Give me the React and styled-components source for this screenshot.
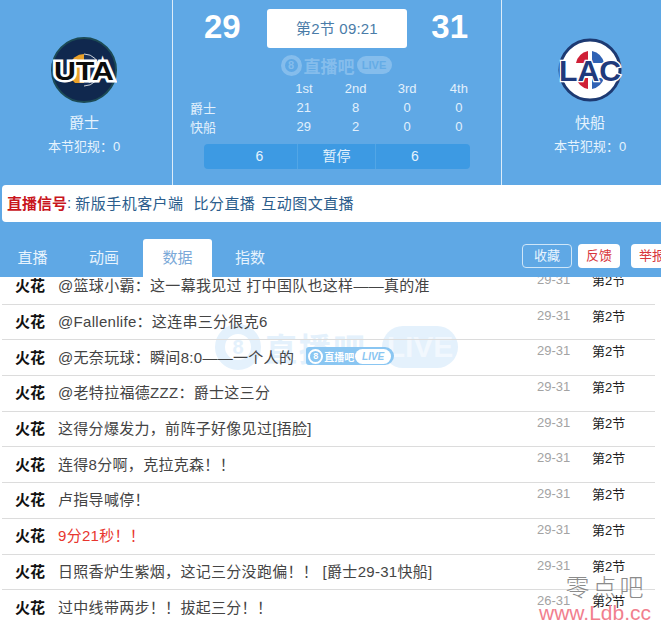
import styled, { createGlobalStyle } from "styled-components";

const HEADER_BLUE = "#5fa8e5";

const GlobalStyle = createGlobalStyle`
  html, body {
    margin: 0;
    padding: 0;
    background: #fff;
    overflow: hidden;
  }
  body {
    font-family: "Liberation Sans", "Noto Sans CJK SC", sans-serif;
  }
`;

const Page = styled.div`
  width: 661px;
  height: 625px;
  overflow: hidden;
  position: relative;
  background: ${HEADER_BLUE};
`;

const Scoreboard = styled.header`
  display: grid;
  grid-template-columns: 172px 330px 159px;
  height: 185px;
`;

const TeamPanel = styled.div`
  display: flex;
  flex-direction: column;
  align-items: center;
  padding-top: 37px;
  color: #e6f3fd;
  padding-right: ${({ $right }) => $right || 0}px;
  padding-left: ${({ $left }) => $left || 0}px;
`;

const TeamName = styled.div`
  font-size: 15px;
  line-height: 20px;
  margin-top: 10px;
`;

const Fouls = styled.div`
  font-size: 13px;
  line-height: 18px;
  margin-top: 5px;
`;

const Middle = styled.div`
  border-left: 1px solid #dcecf9;
  border-right: 1px solid #dcecf9;
  padding-top: 8px;
`;

const ScoreRow = styled.div`
  display: grid;
  grid-template-columns: 94px 140px 94px;
  align-items: center;
  height: 39px;
`;

const Score = styled.div`
  font-size: 33px;
  font-weight: bold;
  color: #fff;
  margin-bottom: 2px;
  text-align: ${({ $side }) => $side};
  padding: ${({ $side }) => ($side === "right" ? "0 33px 0 0" : "0 0 0 31px")};
`;

const Clock = styled.div`
  height: 39px;
  line-height: 39px;
  background: #fff;
  border-radius: 3px;
  text-align: center;
  font-size: 15px;
  letter-spacing: 0.2px;
  color: #4a7ca8;
`;

const CenterMark = styled.div`
  display: flex;
  justify-content: center;
  margin: 7px 0 0 -2px;
  height: 22px;
`;

const QuarterTable = styled.div`
  display: grid;
  grid-template-columns: 88px repeat(4, 51.7px);
  grid-auto-rows: 19px;
  align-items: center;
  padding-left: 17px;
  margin-top: 3px;
  font-size: 13px;
  color: #e2f0fc;
`;

const Cell = styled.div`
  text-align: ${({ $label }) => ($label ? "left" : "center")};
`;

const TimeoutBar = styled.div`
  display: grid;
  grid-template-columns: 93px 78px 95px;
  height: 25px;
  width: 266px;
  margin: 8px 0 0 31px;
  background: #3d9ae3;
  border-radius: 4px;
  color: #e6f3fd;
  font-size: 14px;
  line-height: 25px;
  text-align: center;
`;

const TimeoutCell = styled.div`
  border-left: ${({ $divider }) => ($divider ? "1px solid #52a6e6" : "none")};
  padding-left: ${({ $pushLeft }) => $pushLeft || 0}px;
  padding-right: ${({ $pushRight }) => $pushRight || 0}px;
`;

const Banner = styled.div`
  height: 37px;
  box-sizing: border-box;
  padding: 0 0 2px 5px;
  margin-left: 2px;
  background: #fff;
  border-radius: 4px 0 0 4px;
  display: flex;
  align-items: center;
  font-size: 15px;
  color: #2b5d8c;
  white-space: nowrap;
`;

const SignalLabel = styled.span`
  color: #c9161d;
  font-weight: bold;
`;

const SignalLink = styled.span`
  margin-right: ${({ $gap }) => $gap}px;
  letter-spacing: 0.45px;
`;

const TabBar = styled.div`
  display: flex;
  align-items: flex-end;
  height: 55px;
  white-space: nowrap;
`;

const Tab = styled.div`
  width: ${({ $width }) => $width}px;
  height: 38px;
  line-height: 38px;
  text-align: center;
  font-size: 15px;
  color: ${({ $active }) => ($active ? "#7ba9d8" : "#e6f3fd")};
  background: ${({ $active }) => ($active ? "#fff" : "transparent")};
  border-radius: 3px 3px 0 0;
`;

const Actions = styled.div`
  display: flex;
  margin-left: auto;
  width: 139px;
  flex-shrink: 0;
  gap: 6px;
  padding-bottom: 9px;
`;

const ActionButton = styled.div`
  flex-shrink: 0;
  height: ${({ $outline }) => ($outline ? 22 : 24)}px;
  line-height: ${({ $outline }) => ($outline ? 22 : 24)}px;
  width: ${({ $width }) => $width}px;
  margin-right: ${({ $gap }) => $gap || 0}px;
  text-align: center;
  font-size: 13px;
  border-radius: 4px;
  border: ${({ $outline }) => ($outline ? "1px solid #cfe6f8" : "none")};
  color: ${({ $outline }) => ($outline ? "#eaf5fe" : "#d8363c")};
  background: ${({ $outline }) => ($outline ? "transparent" : "#fff")};
`;

const Feed = styled.div`
  position: relative;
  height: 348px;
  overflow: hidden;
  background: #fff;
`;

const FeedList = styled.ul`
  position: relative;
  list-style: none;
  margin: -8px 0 0 0;
  padding: 0;
`;

const FeedRow = styled.li`
  display: flex;
  align-items: center;
  height: 35.7px;
  box-sizing: border-box;
  margin: 0 6px 0 2px;
  padding: 0 0 3px 13px;
  border-bottom: 1px solid #dcdcdc;
  font-size: 15px;
  white-space: nowrap;
`;

const Author = styled.b`
  width: 43px;
  flex-shrink: 0;
  color: #111;
`;

const Message = styled.div`
  flex: 1;
  display: flex;
  align-items: center;
  letter-spacing: 0.3px;
  color: ${({ $alert }) => ($alert ? "#e8352e" : "#444")};
`;

const Stamp = styled.div`
  align-self: flex-start;
  margin-top: ${({ $muted }) => ($muted ? 1 : 2)}px;
  line-height: 20px;
  width: ${({ $width }) => $width}px;
  color: ${({ $muted }) => ($muted ? "#a3a3a3" : "#222")};
  font-size: 13px;
`;

const BigMark = styled.div`
  position: absolute;
  left: 215px;
  top: 48px;
  height: 44px;
  display: flex;
  align-items: center;
  gap: 4px;
  color: #e4f1fc;
  font-size: 32px;
  font-weight: bold;
  white-space: nowrap;
`;

const MarkRing = styled.span`
  display: inline-block;
  box-sizing: border-box;
  border-radius: 50%;
  flex-shrink: 0;
  text-align: center;
  letter-spacing: 0;
  width: ${({ $size }) => $size}px;
  height: ${({ $size }) => $size}px;
  line-height: ${({ $size, $ring }) => $size - $ring * 2}px;
  border: ${({ $ring }) => $ring}px solid currentColor;
  font-size: ${({ $font }) => $font}px;
  font-weight: bold;
`;

const MarkLive = styled.span`
  border-radius: 22px;
  text-align: center;
  font-weight: bold;
  letter-spacing: 0;
  font-style: ${({ $italic }) => ($italic ? "italic" : "normal")};
  width: ${({ $width }) => $width}px;
  height: ${({ $height }) => $height}px;
  line-height: ${({ $height }) => $height}px;
  font-size: ${({ $font }) => $font}px;
  background: ${({ $bg }) => $bg};
  color: ${({ $fg }) => $fg};
`;

const BigLabel = styled.span`
  width: 113px;
  letter-spacing: 2px;
`;

const InlineMark = styled.span`
  display: inline-flex;
  align-items: center;
  margin-left: 12px;
  height: 18px;
  width: 88px;
  background: #8ac6f2;
  color: #fff;
  border-radius: 3px 9px 9px 3px;
  font-size: 10px;
  font-weight: bold;
  padding-left: 2px;
  box-sizing: border-box;
  gap: 1px;
  letter-spacing: 0;
  white-space: nowrap;
`;

const HeaderMark = styled.div`
  display: flex;
  align-items: center;
  gap: 2px;
  color: #85bdec;
  font-size: 17px;
  font-weight: bold;
  white-space: nowrap;
`;

const SiteStamp = styled.div`
  position: absolute;
  right: 9px;
  bottom: 0;
  width: 114px;
  text-align: center;
`;

const StampName = styled.div`
  font-size: 24px;
  line-height: 27px;
  letter-spacing: 3px;
  font-weight: 300;
  color: #777;
  opacity: 0.85;
  padding-left: 22px;
`;

const StampUrl = styled.div`
  font-size: 21px;
  line-height: 24px;
  color: #f17f8e;
  white-space: nowrap;
`;

const UtaLogo = () => (
  <svg width="66" height="66" viewBox="0 0 66 66">
    <circle cx="33" cy="33" r="32" fill="#10284e" stroke="#1c4a55" strokeWidth="2" />
    <path d="M33 17a16 16 0 0 0-9 29h9z" fill="#eba22a" />
    <path d="M33 17a16 16 0 0 1 0 32" fill="#17305a" stroke="#cfd4da" strokeWidth="1" />
    <text
      x="33"
      y="43"
      textAnchor="middle"
      fontFamily="Liberation Sans"
      fontWeight="bold"
      fontSize="26"
      fill="#0c0c0c"
      stroke="#fff"
      strokeWidth="5"
      paintOrder="stroke"
      textLength="60"
      lengthAdjust="spacingAndGlyphs"
    >
      UTA
    </text>
  </svg>
);

const LacLogo = () => (
  <svg width="66" height="66" viewBox="0 0 66 66">
    <circle cx="33" cy="33" r="30" fill="#fff" stroke="#1d3a72" strokeWidth="3" />
    <path d="M19 26a16 16 0 0 1 12-12v12z" fill="#cf1f36" />
    <path d="M35 14a16 16 0 0 1 12 12H35z" fill="#2f62b4" />
    <path d="M19 41h12v11a16 16 0 0 1-12-11z" fill="#cf1f36" />
    <path d="M35 41h12a16 16 0 0 1-12 11z" fill="#2f62b4" />
    <text
      x="33"
      y="44"
      textAnchor="middle"
      fontFamily="Liberation Sans"
      fontWeight="bold"
      fontSize="29"
      fill="#1f3a7c"
      stroke="#fff"
      strokeWidth="2.5"
      paintOrder="stroke"
      textLength="62"
      lengthAdjust="spacingAndGlyphs"
    >
      LAC
    </text>
  </svg>
);

const QUARTERS = ["1st", "2nd", "3rd", "4th"];
const LINES = [
  { team: "爵士", points: [21, 8, 0, 0] },
  { team: "快船", points: [29, 2, 0, 0] },
];

const FEED = [
  { text: "@篮球小霸：这一幕我见过 打中国队也这样——真的准", score: "29-31" },
  { text: "@Fallenlife：这连串三分很克6", score: "29-31" },
  { text: "@无奈玩球：瞬间8:0——一个人的", score: "29-31", mark: true },
  { text: "@老特拉福德ZZZ：爵士这三分", score: "29-31" },
  { text: "这得分爆发力，前阵子好像见过[捂脸]", score: "29-31" },
  { text: "连得8分啊，克拉克森！！", score: "29-31" },
  { text: "卢指导喊停！", score: "29-31" },
  { text: "9分21秒！！", score: "29-31", alert: true },
  { text: "日照香炉生紫烟，这记三分没跑偏！！ [爵士29-31快船]", score: "29-31" },
  { text: "过中线带两步！！拔起三分！！", score: "26-31" },
];

function App() {
  return (
    <Page>
      <GlobalStyle />
      <Scoreboard>
        <TeamPanel $right={4}>
          <UtaLogo />
          <TeamName>爵士</TeamName>
          <Fouls>本节犯规：0</Fouls>
        </TeamPanel>
        <Middle>
          <ScoreRow>
            <Score $side="left">29</Score>
            <Clock>第2节 09:21</Clock>
            <Score $side="right">31</Score>
          </ScoreRow>
          <CenterMark>
            <HeaderMark>
              <MarkRing $size={21} $ring={4} $font={11}>8</MarkRing>
              直播吧
              <MarkLive $width={35} $height={18} $font={11} $bg="#85bdec" $fg="#64ace6">LIVE</MarkLive>
            </HeaderMark>
          </CenterMark>
          <QuarterTable>
            <Cell $label />
            {QUARTERS.map((q) => (
              <Cell key={q}>{q}</Cell>
            ))}
            {LINES.map((line) => [
              <Cell $label key={line.team}>{line.team}</Cell>,
              ...line.points.map((p, i) => <Cell key={line.team + i}>{p}</Cell>),
            ])}
          </QuarterTable>
          <TimeoutBar>
            <TimeoutCell $pushLeft={18}>6</TimeoutCell>
            <TimeoutCell $divider>暂停</TimeoutCell>
            <TimeoutCell $divider $pushRight={16}>6</TimeoutCell>
          </TimeoutBar>
        </Middle>
        <TeamPanel $left={17}>
          <LacLogo />
          <TeamName>快船</TeamName>
          <Fouls>本节犯规：0</Fouls>
        </TeamPanel>
      </Scoreboard>

      <Banner>
        <SignalLabel>直播信号</SignalLabel>
        <span>:&nbsp;</span>
        <SignalLink $gap={10}>新版手机客户端</SignalLink>
        <SignalLink $gap={6}>比分直播</SignalLink>
        <SignalLink $gap={0}>互动图文直播</SignalLink>
      </Banner>

      <TabBar>
        <Tab $width={65}>直播</Tab>
        <Tab $width={78}>动画</Tab>
        <Tab $width={69} $active>数据</Tab>
        <Tab $width={76}>指数</Tab>
        <Actions>
          <ActionButton $outline $width={48}>收藏</ActionButton>
          <ActionButton $width={42} $gap={5}>反馈</ActionButton>
          <ActionButton $width={42}>举报</ActionButton>
        </Actions>
      </TabBar>

      <Feed>
        <BigMark>
          <MarkRing $size={46} $ring={10} $font={20}>8</MarkRing>
          <BigLabel>直播吧</BigLabel>
          <MarkLive $width={76} $height={42} $font={30} $bg="#e4f1fc" $fg="#f2f8fe">LIVE</MarkLive>
        </BigMark>
        <FeedList>
          {FEED.map((row, i) => (
            <FeedRow key={i}>
              <Author>火花</Author>
              <Message $alert={row.alert}>
                {row.text}
                {row.mark && (
                  <InlineMark>
                    <MarkRing $size={15} $ring={2} $font={9}>8</MarkRing>
                    直播吧
                    <MarkLive $italic $width={36} $height={15} $font={10} $bg="#fff" $fg="#8ac6f2">LIVE</MarkLive>
                  </InlineMark>
                )}
              </Message>
              <Stamp $muted $width={55}>{row.score}</Stamp>
              <Stamp $width={63}>第2节</Stamp>
            </FeedRow>
          ))}
        </FeedList>
        <SiteStamp>
          <StampName>零点吧</StampName>
          <StampUrl>www.Ldb.cc</StampUrl>
        </SiteStamp>
      </Feed>
    </Page>
  );
}

export default App;
